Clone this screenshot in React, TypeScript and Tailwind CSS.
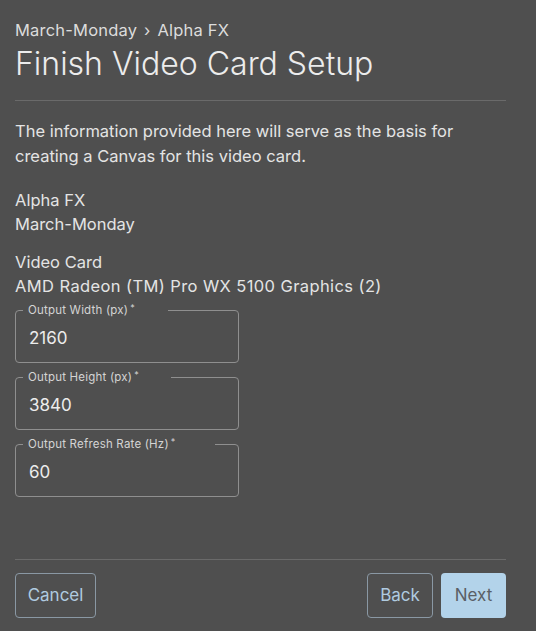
import React from 'react'

const fields = [
  { label: 'Output Width (px)', value: '2160', notch: 'w-[145px]' },
  { label: 'Output Height (px)', value: '3840', notch: 'w-[148px]' },
  { label: 'Output Refresh Rate (Hz)', value: '60', notch: 'w-[192px]' },
]

function OutlinedField({ label, value, notch }: { label: string; value: string; notch: string }) {
  return (
    <fieldset className="w-[224px] h-[59px] border border-[#8f8f8f] rounded-[4px] pl-[7px] pr-3 m-0 min-w-0">
      <legend className={`${notch} px-[5px] text-[11.5px] leading-[13px] tracking-[0.2px] text-[#d4d4d4]`}>
        {label}
        <span className="relative -top-[3px] ml-[2px] text-[9px]">*</span>
      </legend>
      <div className="pl-[6px] pt-[11px] text-[17px] leading-[20px] text-[#ececec]">{value}</div>
    </fieldset>
  )
}

export default function App() {
  return (
    <div
      className="w-[536px] h-[631px] bg-[#4f4f4f] text-[#e4e4e4] flex flex-col pl-[15px] pr-[30px]"
      style={{ fontFamily: 'Inter, "Open Sans", sans-serif' }}
    >
      {/* Header */}
      <div className="pt-[20px] text-[16.5px] leading-[20px] tracking-[0.2px] text-[#dcdcdc]">
        March-Monday <span className="mx-[2px]">›</span> Alpha FX
      </div>
      <h1 className="mt-[5px] text-[32px] leading-[38px] text-[#ececec] font-light">
        Finish Video Card Setup
      </h1>
      <div className="mt-[17px] border-t border-[#6a6a6a]" />

      {/* Body */}
      <div className="text-[16.5px] leading-[25px]">
        <p className="mt-[18px]">
          The information provided here will serve as the basis for
          <br />
          creating a Canvas for this video card.
        </p>

        <div className="mt-[19px] leading-[24px]">
          <div>Alpha FX</div>
          <div>March-Monday</div>
        </div>

        <div className="mt-[14px] leading-[24px]">
          <div>Video Card</div>
          <div className="tracking-[0.4px]">AMD Radeon (TM) Pro WX 5100 Graphics (2)</div>
        </div>
      </div>

      <div className="mt-[6px] flex flex-col gap-[8px]">
        {fields.map((f) => (
          <OutlinedField key={f.label} {...f} />
        ))}
      </div>

      {/* Footer */}
      <div className="mt-auto border-t border-[#6a6a6a]" />
      <div className="pt-[13px] pb-[13px] flex items-center">
        <button className="h-[45px] w-[81px] border border-[#8a98a4] rounded-[4px] text-[17px] text-[#b0cbe0]">
          Cancel
        </button>
        <div className="ml-auto flex gap-[8px]">
          <button className="h-[45px] w-[66px] border border-[#8a98a4] rounded-[4px] text-[17px] text-[#b0cbe0]">
            Back
          </button>
          <button className="h-[45px] w-[65px] bg-[#b3d3ea] rounded-[4px] text-[17px] text-[#5a5f66]">
            Next
          </button>
        </div>
      </div>
    </div>
  )
}
